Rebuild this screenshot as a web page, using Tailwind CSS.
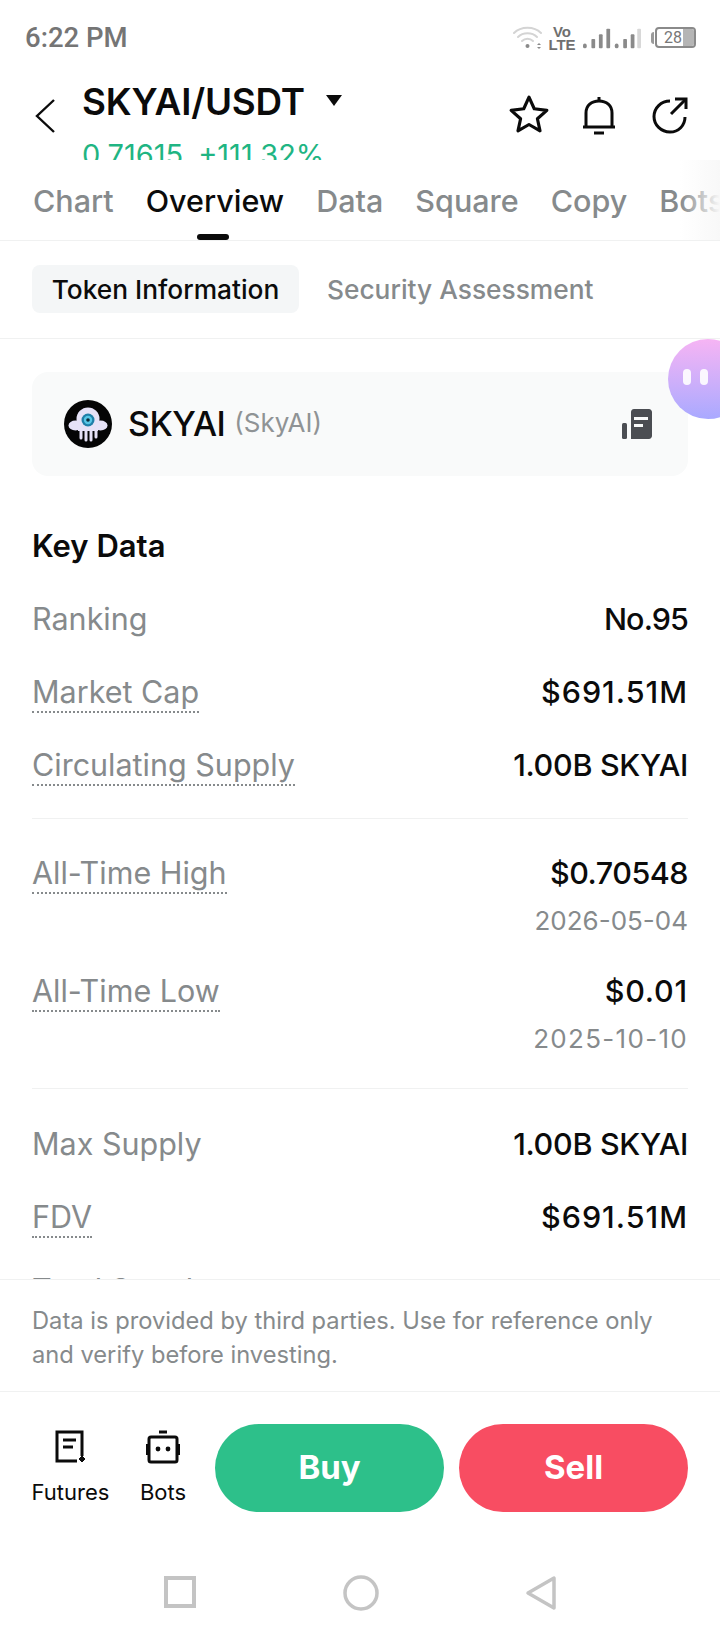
<!DOCTYPE html>
<html lang="en">
<head>
  <meta charset="UTF-8">
  <title>SKYAI/USDT Overview</title>
  <script src="https://cdn.jsdelivr.net/npm/@tailwindcss/browser@4"></script>
</head>
<body class="bg-white">
  <div class="relative w-[720px] h-[1640px] flex flex-col overflow-hidden bg-white text-[#0b0b0b] [font-family:Inter,sans-serif]">

    <!-- Status bar -->
    <div class="h-[72px] shrink-0 flex items-center justify-between pl-[25px] pr-[24px] pt-[3px]">
      <span class="text-[27.500px] leading-none text-[#757575] font-medium [font-family:Roboto,sans-serif]">6:22 PM</span>
      <div class="flex items-center">
        <svg width="36" height="26" viewBox="0 0 36 26" fill="none" stroke-linecap="round">
          <path d="M1 8C8 1 21 1 28 8" stroke="#d4d4d4" stroke-width="2"/>
          <path d="M5 12C10 7 19 7 24 12" stroke="#d4d4d4" stroke-width="2"/>
          <path d="M9 16C12 13 17 13 20 16" stroke="#d4d4d4" stroke-width="2"/>
          <circle cx="14.500" cy="21" r="2" fill="#8a8a8a"/>
          <path d="M26 18l-2 2h4zM26 24l-2-2h4z" fill="#8a8a8a"/>
        </svg>
        <div class="w-[26px] flex flex-col items-center text-[#6f6f6f] text-[15px] leading-[13px] font-bold [font-family:'Liberation_Sans',sans-serif]">
          <span>Vo</span>
          <span>LTE</span>
        </div>
        <svg class="ml-[8px]" width="58" height="24" viewBox="0 0 62 24" fill="#8a8a8a">
          <rect x="0" y="18" width="4" height="5" rx="2"/>
          <rect x="9" y="13" width="4" height="10" rx="1"/>
          <rect x="17" y="8" width="4" height="15" rx="1"/>
          <rect x="25" y="2" width="4" height="21" rx="1"/>
          <rect x="34" y="18" width="4" height="5" rx="2"/>
          <rect x="43" y="13" width="4" height="10" rx="1"/>
          <rect x="51" y="8" width="4" height="15" rx="1"/>
          <rect x="58" y="2" width="4" height="21" rx="1" fill="#d8d8d8"/>
        </svg>
        <div class="ml-[10px] w-[3px] h-[12px] rounded-l-sm bg-[#9a9a9a]"></div>
        <div class="ml-[1px] w-[41px] h-[21px] border-2 border-[#8a8a8a] rounded-[4px] flex items-center pl-[7px] relative overflow-hidden">
          <span class="text-[16px] leading-none text-[#777] [font-family:Roboto,sans-serif]">28</span>
          <div class="absolute right-0 top-0 bottom-0 w-[11px] bg-[#b5b5b5]"></div>
        </div>
      </div>
    </div>

    <!-- Pair header -->
    <div class="h-[88px] shrink-0 flex overflow-hidden relative">
      <div class="w-[82px] shrink-0 pl-[34px] pt-[26px]">
        <svg width="22" height="36" viewBox="0 0 22 36" fill="none" stroke="#0b0b0b" stroke-width="2.400">
          <path d="M20 2L3 18L20 34" stroke-linejoin="miter"/>
        </svg>
      </div>
      <div class="flex-1 min-w-0">
        <div class="flex items-center h-[52px] mt-[4px]">
          <span class="text-[36.800px] leading-none font-semibold tracking-[-0.2px]">SKYAI/USDT</span>
          <svg class="ml-[21px] mt-[-4px]" width="16" height="11" viewBox="0 0 16 11" fill="#0b0b0b"><path d="M0 0H16L8 11Z"/></svg>
        </div>
        <div class="text-[#1fb583] text-[29px] leading-[32px] mt-[11px] flex gap-[15px]">
          <span>0.71615</span>
          <span>+111.32%</span>
        </div>
      </div>
      <div class="absolute right-0 top-0 flex">
        <svg class="absolute right-[170px] top-[22px]" width="42" height="40" viewBox="0 0 40 38" fill="none" stroke="#0b0b0b" stroke-width="3" stroke-linejoin="round">
          <path d="M20 3L25 14L37 15.500L28 23.500L30.500 35L20 29L9.500 35L12 23.500L3 15.500L15 14Z"/>
        </svg>
        <svg class="absolute right-[104px] top-[24px]" width="34" height="40" viewBox="0 0 34 40" fill="none" stroke="#0b0b0b" stroke-width="3">
          <path d="M4 31V17C4 9.500 9.500 5 17 5C24.500 5 30 9.500 30 17V31"/>
          <path d="M1 31H33"/>
          <path d="M17 1V5"/>
          <path d="M12 37H22"/>
        </svg>
        <svg class="absolute right-[32px] top-[24px]" width="36" height="38" viewBox="0 0 36 38" fill="none" stroke="#0b0b0b" stroke-width="3">
          <path d="M18 5C9 5 2 12 2 20.500C2 29 9 36 18 36C26.500 36 33 29.500 33 21"/>
          <path d="M19 18L33 4"/>
          <path d="M23 3H34V13"/>
        </svg>
      </div>
    </div>

    <!-- Main tabs -->
    <div class="h-[81px] shrink-0 border-b border-[#f0f1f1] relative overflow-hidden">
      <div class="flex gap-[32px] pl-[33px] h-[80px] items-start pt-[22px] text-[30.500px] leading-[38px] text-[#868a8c] whitespace-nowrap font-medium">
        <span>Chart</span>
        <span class="relative text-[#0b0b0b]">Overview
          <span class="absolute left-[51px] top-[52px] w-[32px] h-[6px] rounded-full bg-[#0b0b0b]"></span>
        </span>
        <span>Data</span>
        <span>Square</span>
        <span>Copy</span>
        <span>Bots</span>
      </div>
      <div class="absolute right-0 top-0 bottom-0 w-[40px] bg-gradient-to-r from-white/0 to-[#f8f8f8]"></div>
    </div>

    <!-- Sub tabs -->
    <div class="h-[98px] shrink-0 border-b border-[#f0f1f1] pt-[24px] pl-[32px] flex items-start gap-[28px] text-[26.300px] whitespace-nowrap">
      <div class="h-[48px] w-[267px] rounded-[8px] bg-[#f4f6f7] flex items-center justify-center font-medium pt-[1px]">Token Information</div>
      <div class="h-[48px] flex items-center text-[#868a8c] font-medium pt-[1px]">Security Assessment</div>
    </div>

    <!-- Scrolling content -->
    <div class="flex-1 min-h-0 overflow-hidden px-[32px] pt-[33px]">
      <div class="h-[104px] rounded-[16px] bg-[#f9fafa] flex items-center pl-[32px] pr-[36px]">
        <svg width="48" height="48" viewBox="0 0 48 48" fill="#e6e2f7">
          <circle cx="24" cy="24" r="24" fill="#050505"/>
          <circle cx="24" cy="19" r="11.500"/>
          <ellipse cx="11.500" cy="25.500" rx="7" ry="5"/>
          <ellipse cx="36.500" cy="25.500" rx="7" ry="5"/>
          <rect x="14" y="22" width="20" height="9"/>
          <path d="M17 29V38M22 29V40M27 29V40M32 29V37" stroke="#e6e2f7" stroke-width="3" stroke-linecap="round" fill="none"/>
          <circle cx="24" cy="20" r="6.500" fill="#1f7fa8"/>
          <circle cx="24" cy="20" r="4.200" fill="#56c6e6"/>
          <circle cx="24" cy="20" r="1.800" fill="#0b2a3a"/>
        </svg>
        <span class="ml-[16px] text-[34px] leading-none font-medium tracking-[-0.5px]">SKYAI</span>
        <span class="ml-[9px] text-[26px] leading-none text-[#8f9395] mt-[-2px]">(SkyAI)</span>
        <svg class="ml-auto" width="30" height="30" viewBox="0 0 30 30" fill="#4b4d52">
          <rect x="0" y="14" width="5" height="16" rx="1.500"/>
          <path d="M9 3C9 1.500 10 0 12 0H27C28.500 0 30 1.500 30 3V27C30 28.500 28.500 30 27 30H9Z"/>
          <rect x="12" y="8" width="14" height="3" fill="#f9fafa"/>
          <rect x="12" y="15" width="9" height="3" fill="#f9fafa"/>
        </svg>
      </div>

      <h2 class="mt-[50px] text-[31px] leading-[40px] font-semibold">Key Data</h2>

      <div class="mt-[33px] text-[30.500px] leading-[40px]">
        <div class="h-[73px] flex justify-between">
          <span class="text-[#868a8c]">Ranking</span>
          <span class="font-medium tracking-[-0.9px]">No.95</span>
        </div>
        <div class="h-[73px] flex justify-between">
          <span class="text-[#868a8c] h-[41px] border-b-2 border-dotted border-[#868a8c]">Market Cap</span>
          <span class="font-medium tracking-[1px]">$691.51M</span>
        </div>
        <div class="h-[73px] flex justify-between">
          <span class="text-[#868a8c] h-[41px] border-b-2 border-dotted border-[#868a8c]">Circulating Supply</span>
          <span class="font-medium tracking-[-0.3px]">1.00B SKYAI</span>
        </div>
      </div>
      <div class="border-t border-[#f0f1f1]"></div>

      <div class="pt-[34px] text-[30.500px] leading-[40px]">
        <div class="h-[118px] flex justify-between">
          <span class="text-[#868a8c] h-[41px] border-b-2 border-dotted border-[#868a8c]">All-Time High</span>
          <div class="text-right">
            <div class="font-medium tracking-[-0.5px]">$0.70548</div>
            <div class="text-[26px] leading-[40px] text-[#868a8c] mt-[8px]">2026-05-04</div>
          </div>
        </div>
        <div class="h-[117px] flex justify-between">
          <span class="text-[#868a8c] h-[41px] border-b-2 border-dotted border-[#868a8c]">All-Time Low</span>
          <div class="text-right">
            <div class="font-medium tracking-[0.8px]">$0.01</div>
            <div class="text-[26px] leading-[40px] text-[#868a8c] mt-[8px] tracking-[1.300px]">2025-10-10</div>
          </div>
        </div>
      </div>
      <div class="border-t border-[#f0f1f1]"></div>

      <div class="pt-[35px] text-[30.500px] leading-[40px]">
        <div class="h-[73px] flex justify-between">
          <span class="text-[#868a8c]">Max Supply</span>
          <span class="font-medium tracking-[-0.3px]">1.00B SKYAI</span>
        </div>
        <div class="h-[73px] flex justify-between">
          <span class="text-[#868a8c] h-[41px] border-b-2 border-dotted border-[#868a8c]">FDV</span>
          <span class="font-medium tracking-[1px]">$691.51M</span>
        </div>
        <div class="h-[40px]">
          <span class="text-[#868a8c]">Total Supply</span>
        </div>
      </div>
    </div>

    <!-- Disclaimer -->
    <div class="h-[113px] shrink-0 border-t border-b border-[#f0f1f1] px-[32px] pt-[24px] text-[23.700px] leading-[34px] text-[#868a8c]">
      Data is provided by third parties. Use for reference only<br>and verify before investing.
    </div>

    <!-- Trade bar -->
    <div class="h-[135px] shrink-0 flex items-start pt-[32px] pl-[32px] pr-[32px]">
      <div class="w-[77px] flex flex-col items-center pt-[6px]">
        <svg width="32" height="34" viewBox="0 0 32 34" fill="none" stroke="#0b0b0b" stroke-width="3">
          <path d="M27 26V2H2V31H22"/>
          <path d="M8 10H21"/>
          <path d="M8 17H18"/>
          <path d="M27 26L30 29L27 32L24 29Z" fill="#0b0b0b" stroke-width="1"/>
        </svg>
        <span class="mt-[14px] text-[22px] leading-[28px]">Futures</span>
      </div>
      <div class="w-[46px] ml-[31px] flex flex-col items-center pt-[6px]">
        <svg width="34" height="34" viewBox="0 0 34 34" fill="none" stroke="#0b0b0b" stroke-width="3">
          <path d="M13 2H21"/>
          <rect x="3" y="7" width="28" height="25" rx="2"/>
          <path d="M1 14V25M33 14V25" stroke-width="2.500"/>
          <circle cx="12" cy="19" r="2.400" fill="#0b0b0b" stroke="none"/>
          <circle cx="22" cy="19" r="2.400" fill="#0b0b0b" stroke="none"/>
        </svg>
        <span class="mt-[14px] text-[22px] leading-[28px]">Bots</span>
      </div>
      <button class="ml-[29px] w-[229px] h-[88px] rounded-full bg-[#2dc08a] text-white text-[33px] font-bold">Buy</button>
      <button class="ml-[15px] w-[229px] h-[88px] rounded-full bg-[#f84d62] text-white text-[33px] font-bold">Sell</button>
    </div>

    <!-- Android nav -->
    <div class="h-[113px] shrink-0 flex items-start justify-center gap-[146px] pt-[48px]">
      <svg width="34" height="34" viewBox="0 0 34 34" fill="none" stroke="#c4c4c4" stroke-width="4"><rect x="3" y="3" width="28" height="28"/></svg>
      <svg width="36" height="36" viewBox="0 0 36 36" fill="none" stroke="#c4c4c4" stroke-width="3.500"><circle cx="18" cy="18" r="16"/></svg>
      <svg width="32" height="36" viewBox="0 0 32 36" fill="none" stroke="#c4c4c4" stroke-width="3.500" stroke-linejoin="round"><path d="M29 3V33L3 18Z"/></svg>
    </div>

    <!-- Floating assistant bubble -->
    <div class="absolute left-[668px] top-[339px] w-[80px] h-[80px] rounded-full bg-gradient-to-b from-[#f6b4f4] to-[#a9a9ff] flex items-center gap-[9px] pl-[15px] pb-[4px]">
      <span class="w-[8px] h-[16px] rounded-full bg-white/90"></span>
      <span class="w-[8px] h-[16px] rounded-full bg-white/90"></span>
    </div>
  </div>
</body>
</html>
